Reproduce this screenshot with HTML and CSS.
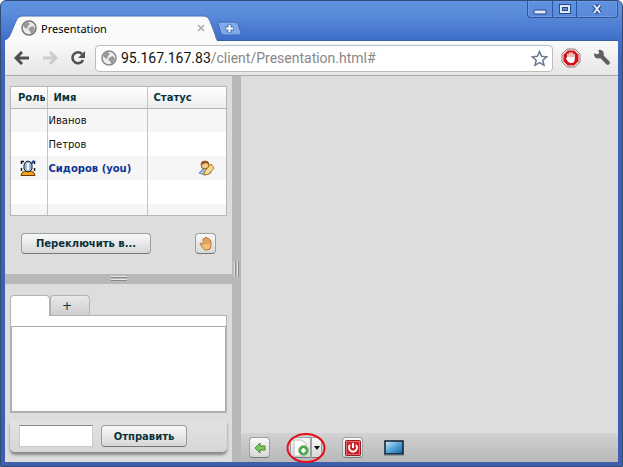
FILE: index.html
```html
<!DOCTYPE html>
<html lang="ru">
<head>
<meta charset="utf-8">
<title>Presentation</title>
<link rel="stylesheet" href="styles.css">
</head>
<body>
<div class="window">
  <header class="titlebar">
    <div class="tab">
      <svg class="tab-shape" viewBox="0 0 212 26" preserveAspectRatio="none" aria-hidden="true"><path d="M0 26V25Q4 24 6 18L11 6Q13 1 18 1H198Q203 1 205 6L210 19Q212 24 212 26Z" fill="#fafafa"/><path d="M0 25Q4 24 6 18L11 6Q13 1 18 1H198Q203 1 205 6L210 19Q211 24 212 25" fill="none" stroke="#4a6eb2" stroke-width="1"/></svg>
      <svg class="globe" viewBox="0 0 16 16" aria-hidden="true"><circle cx="8" cy="8" r="7" fill="#eee" stroke="#777" stroke-width="1.5"/><path d="M3 3L7 2 9 4 7 6 6 9 4 8 2 6ZM9 7L12 6 14 9 12 13 10 14 9 11 7 10Z" fill="#999"/></svg>
      <span class="tab-title">Presentation</span>
      <button class="plain tab-close" aria-label="Закрыть вкладку"><svg width="8" height="8" viewBox="0 0 8 8"><path d="M1 1L7 7M7 1L1 7" stroke="#aaa" stroke-width="1.5"/></svg></button>
    </div>
    <button class="plain new-tab" aria-label="Новая вкладка"><svg width="25" height="15" viewBox="0 0 25 15"><path d="M3 1H18Q20 1 21 3L24 12Q24 14 22 14H7Q5 14 4 12L1 3Q1 1 3 1Z" fill="#80a9e9" stroke="#4169b8"/><path d="M12.500 3.500V11.500M8.500 7.500H16.500" stroke="#476cae" stroke-width="4"/><path d="M12.500 4V11M9 7.500H16" stroke="#fff" stroke-width="2"/></svg></button>
    <div class="window-buttons">
      <button class="plain" aria-label="Свернуть"><svg width="14" height="12" viewBox="0 0 14 12"><path d="M1 7H13V11H1Z" fill="#dce8fb" stroke="#294987"/></svg></button>
      <button class="plain" aria-label="Развернуть"><svg width="14" height="12" viewBox="0 0 14 12"><path d="M3 3H11V9H3Z" fill="none" stroke="#294987" stroke-width="4"/><path d="M3 3H11V9H3Z" fill="none" stroke="#dce8fb" stroke-width="2"/></svg></button>
      <button class="plain wide" aria-label="Закрыть"><svg width="12" height="12" viewBox="0 0 12 12"><path d="M3 2L9 10M9 2L3 10" stroke="#294987" stroke-width="4"/><path d="M3 2L9 10M9 2L3 10" stroke="#e3edff" stroke-width="2"/></svg></button>
    </div>
  </header>
  <nav class="toolbar">
    <button class="plain nav" aria-label="Назад"><svg width="16" height="14" viewBox="0 0 16 14"><path d="M8 1L2 7 8 13M2 7H15" fill="none" stroke="#505050" stroke-width="3"/></svg></button>
    <button class="plain nav" aria-label="Вперёд"><svg width="16" height="14" viewBox="0 0 16 14"><path d="M8 1L14 7 8 13M14 7H1" fill="none" stroke="#ccc" stroke-width="3"/></svg></button>
    <button class="plain nav" aria-label="Обновить"><svg width="16" height="16" viewBox="0 0 16 16"><path d="M12 4A5.500 5.500 0 1 0 13 10" fill="none" stroke="#505050" stroke-width="2.600"/><path d="M15 1V8H8Z" fill="#505050"/></svg></button>
    <div class="address">
      <svg class="globe" viewBox="0 0 16 16" aria-hidden="true"><circle cx="8" cy="8" r="7" fill="#eee" stroke="#888" stroke-width="1.500"/><path d="M3 3L7 2 9 4 7 6 6 9 4 8 2 6ZM9 7L12 6 14 9 12 13 10 14 9 11 7 10Z" fill="#999"/></svg>
      <span class="url"><b>95.167.167.83</b>/client/Presentation.html#</span>
      <button class="plain" aria-label="В закладки"><svg width="17" height="17" viewBox="0 0 17 17"><path d="M8.500 1.500L10.600 6.300 15.700 6.800 11.800 10.200 13 15.300 8.500 12.600 4 15.300 5.200 10.200 1.300 6.800 6.400 6.300Z" fill="#fff" stroke="#69798e" stroke-width="1.500"/></svg></button>
    </div>
    <button class="plain blocker" aria-label="Блокировщик"><svg width="20" height="20" viewBox="0 0 20 20"><path d="M6 1H14L19 6V14L14 19H6L1 14V6Z" fill="#eee" stroke="#977"/><path d="M6.700 2.500H13.300L17.500 6.700V13.300L13.300 17.500H6.700L2.500 13.300V6.700Z" fill="#d2141d"/><path d="M7 9.500V6M9 9V5M11 9V5M13 10V6.500" stroke="#fff" stroke-width="1.400" stroke-linecap="round"/><path d="M6.300 9H13.700V12Q13 15 10.500 15H9.500Q7 14.500 5 10.500Z" fill="#fff"/></svg></button>
    <button class="plain" aria-label="Настройки"><svg width="18" height="18" viewBox="0 0 17 17"><path d="M7 6L14 13" stroke="#606060" stroke-width="4" stroke-linecap="round"/><path d="M1 4L4 5 6 4 5 1Q8 0 10 3 11 6 8 8 5 10 2 8 1 7 1 4Z" fill="#606060"/></svg></button>
  </nav>
  <main class="content">
    <section class="side">
      <div class="people">
        <div class="list">
          <table>
            <colgroup><col class="c-role"><col class="c-name"><col></colgroup>
            <thead><tr><th><span>Роль</span></th><th>Имя</th><th>Статус</th></tr></thead>
            <tbody>
              <tr><td></td><td>Иванов</td><td></td></tr>
              <tr><td></td><td>Петров</td><td></td></tr>
              <tr class="me"><td class="role"><svg width="16" height="16" viewBox="0 0 16 16"><path d="M1.500 4V1.500H4M12 1.500H14.500V4M1.500 8V11M14.500 8V11" fill="none" stroke="#111" stroke-width="1.500"/><path d="M1 15.500Q1 12 5 11H11Q15 12 15 15.500Z" fill="#f7a61c" stroke="#6b3600"/><path d="M4 5Q5 1 8 1T12 5V9Q10 12 8 12T4 9Z" fill="#9fb9d2" stroke="#18202f"/><path d="M7 3H9V10H7Z" fill="#eef5fa"/><path d="M11 4L14 1" stroke="#2952bb" stroke-width="2"/></svg></td><td>Сидоров (you)</td><td class="status"><svg width="17" height="16" viewBox="0 0 17 16"><path d="M1 13L5 9 11 8 13 13 7 15Z" fill="#9cbfe5" stroke="#6688b5"/><circle cx="7" cy="5" r="4" fill="#f5c98d" stroke="#955d22"/><path d="M3 5Q2 1 7 1T11 5L8 3Z" fill="#985b20"/><path d="M7 11L13 4 16 8 11 14 6 15Z" fill="#f8d88e" stroke="#b47823"/></svg></td></tr>
              <tr><td></td><td></td><td></td></tr>
              <tr class="rest"><td></td><td></td><td></td></tr>
            </tbody>
          </table>
        </div>
        <div class="actions">
          <button class="btn switch">Переключить в...</button>
          <button class="btn square hand" aria-label="Поднять руку"><svg width="14" height="15" viewBox="0 0 14 15"><path d="M4 9V3Q5 1.500 6 3V2Q7 0 8 2V2.500Q9 1 10 3V4Q11.500 3 12 5V10Q12 14 8 14H6Q4 13 1 8 1 6 3 8Z" fill="#f3bd78" stroke="#b77a34"/><path d="M6 3V8M8 3V8M10 4V8" stroke="#c98a42"/></svg></button>
        </div>
      </div>
      <div class="split-h"><i></i></div>
      <div class="chat">
        <div class="chat-tabs"><button class="chat-tab on" aria-label="Чат"></button><button class="chat-tab">+</button></div>
        <div class="chat-box"><textarea aria-label="Сообщения" readonly></textarea></div>
        <form class="send"><input type="text" aria-label="Сообщение"><button type="button" class="btn submit">Отправить</button></form>
      </div>
    </section>
    <div class="split-v"><i></i></div>
    <section class="stage">
      <div class="controls">
        <button class="btn square" aria-label="Назад"><svg width="12" height="12" viewBox="0 0 12 12"><path d="M1 6L6 1V4H11V8H6V11Z" fill="#82c45c" stroke="#4a8538"/></svg></button>
        <div class="add">
          <button class="btn file" aria-label="Добавить"><svg width="18" height="18" viewBox="0 0 18 18"><path d="M2 1H10L14 5V17H2Z" fill="#fff" stroke="#bbb"/><circle cx="11.500" cy="11.500" r="5" fill="#4ca44b" stroke="#95c38d"/><path d="M11.500 9V14M9 11.500H14" stroke="#fff" stroke-width="2"/></svg></button><button class="btn arrow" aria-label="Меню"><svg width="6" height="4" viewBox="0 0 6 4"><path d="M0 0H6L3 4Z" fill="#111"/></svg></button>
          <svg class="ring" viewBox="0 0 40 30" aria-hidden="true"><ellipse cx="20" cy="15" rx="18.500" ry="14" fill="none" stroke="#e5101c" stroke-width="2"/></svg>
        </div>
        <button class="btn square" aria-label="Выключить"><svg width="16" height="16" viewBox="0 0 16 16"><rect x=".5" y=".5" width="15" height="15" rx="1" fill="#cf2028" stroke="#941b20"/><rect x="1.500" y="1.500" width="13" height="13" fill="none" stroke="#e36a68"/><path d="M5 5A4 4 0 1 0 11 5M8 3V8" fill="none" stroke="#fff" stroke-width="2"/></svg></button>
        <button class="btn square quiet" aria-label="Экран"><svg class="screen" width="20" height="16" viewBox="0 0 20 16"><defs><linearGradient id="scr" x1="0" y1="0" x2="1" y2="1"><stop offset="0" stop-color="#d3f0ff"/><stop offset=".5" stop-color="#55a5da"/><stop offset="1" stop-color="#12639f"/></linearGradient></defs><rect x="1" y="1" width="18" height="13" fill="url(#scr)" stroke="#101c2c" stroke-width="1.500"/><path d="M0 15H20" stroke="#68727c"/></svg></button>
      </div>
    </section>
  </main>
</div>
</body>
</html>
```
FILE: styles.css
```css
* { box-sizing: border-box; }

body {
  margin: 0;
  font-family: "DejaVu Sans", Verdana, sans-serif;
  font-size: 10px;
  color: #0b333c;
  background: #fff;
}

svg { display: block; flex: none; }
button, input, textarea { font: inherit; color: inherit; }

.plain { display: flex; align-items: center; justify-content: center; padding: 0; border: 0; background: none; }

.window {
  display: flex;
  flex-direction: column;
  height: 100vh;
  padding: 0 4px 4px;
  border: 1px solid #344b7a;
  border-radius: 6px 6px 0 0;
  background: linear-gradient(#5b92df 0, #5c8cda 12px, #3e6dca 40px, #3e63b3 60px, #3e5eae);
}

.titlebar { display: flex; align-items: flex-end; height: 40px; flex: none; border-bottom: 1px solid #385fac; }

.tab { position: relative; display: flex; align-items: center; gap: 4px; width: 212px; height: 26px; margin-bottom: -1px; padding: 0 12px 0 16px; }
.tab > * { position: relative; }
.tab .tab-shape { position: absolute; inset: 0; width: 100%; height: 100%; }
.globe { width: 16px; height: 16px; }
.tab-title { flex: 1; font-family: "Noto Sans", sans-serif; font-size: 11px; color: #000; }
.new-tab { margin-bottom: 4px; }

.window-buttons { display: flex; align-self: flex-start; margin-left: auto; height: 17px; border: 1px solid #2f559e; border-top: 0; border-radius: 0 0 4px 4px; box-shadow: inset 0 0 0 1px #6d9be4; }
.window-buttons button { width: 24px; }
.window-buttons button + button { border-left: 1px solid #2f559e; }
.window-buttons .wide { width: 41px; }

.toolbar { display: flex; align-items: center; gap: 12px; height: 35px; flex: none; padding: 0 7px 0 9px; background: linear-gradient(#fafafa, #e6e6e6); border-bottom: 1px solid #aaa; }
.address { display: flex; align-items: center; flex: 1; gap: 4px; height: 27px; margin: 0 -4px 0 -3px; padding: 0 4px 0 5px; border: 1px solid #bdbdbd; border-radius: 4px; background: #fff; }
.url { flex: 1; font-family: Roboto, sans-serif; font-size: 14px; white-space: nowrap; color: #888; }
.url b { font-weight: normal; color: #111; }

.content { display: grid; grid-template-columns: 227px 9px 1fr; flex: 1; min-height: 0; background: #ddd; }
.side { display: flex; flex-direction: column; min-height: 0; }

.people { padding: 10px 5px 20px 5px; }
.list { border: 1px solid #b4b7b9; background: #fff; }
table { width: 100%; border-collapse: collapse; table-layout: fixed; font-size: 10px; }
.c-role { width: 36px; }
.c-name { width: 100px; }
th, td { padding: 0 1px; text-align: left; white-space: nowrap; overflow: hidden; }
th + th, td + td { border-left: 1px solid #c0c4c6; }
th { height: 21px; padding: 0 6px; background: linear-gradient(#fff, #ececec); border-bottom: 1px solid #b4b7b9; }
th:first-child { padding: 0 2px 0 7px; }
th span { display: block; overflow: hidden; }
td { height: 24px; color: #111; }
tbody tr:nth-child(odd) { background: #f6f6f6; }
.me { font-weight: bold; color: #0b3596; }
.me td { color: inherit; }
.role { padding-left: 9px; }
.status svg { margin-left: auto; margin-right: 10px; }
.rest td { height: 11px; }

.btn {
  display: flex; align-items: center; justify-content: center;
  height: 21px; padding: 0;
  border: 1px solid #999fa2; border-bottom-color: #777; border-radius: 4px;
  background: linear-gradient(#f9f9f9, #d7d7d7);
  font-weight: bold;
}
.actions { display: flex; justify-content: space-between; padding: 17px 11px 0; }
.switch { width: 130px; }
.square { width: 21px; }
.quiet { border-color: transparent; background: none; }

.split-h { display: flex; align-items: center; justify-content: center; height: 10px; flex: none; background: #b8b8b8; }
.split-h i { width: 16px; height: 6px; background: repeating-linear-gradient(#e4e4e4 0 1px, #888 1px 2px, #b8b8b8 2px 3px); }
.split-v { display: flex; align-items: center; justify-content: center; background: #b8b8b8; }
.split-v i { width: 6px; height: 16px; background: repeating-linear-gradient(90deg, #e4e4e4 0 1px, #888 1px 2px, #b8b8b8 2px 3px); }

.chat { display: flex; flex-direction: column; flex: 1; min-height: 0; padding: 11px 5px 10px; }
.chat-tabs { display: flex; }
.chat-tab { width: 40px; height: 20px; padding: 0 6px 0 0; border: 1px solid #b0b3b5; border-bottom: 0; border-radius: 4px 4px 0 0; background: linear-gradient(#e9e9e9, #cecece); font-size: 12px; line-height: 18px; }
.chat-tab.on { height: 21px; margin-bottom: -1px; background: #fff; z-index: 1; }
.chat-box { display: flex; flex: 1; min-height: 0; padding-top: 10px; border: 1px solid #b0b3b5; background: #fff; }
textarea { flex: 1; width: 100%; padding: 2px; border: 1px solid #aaacad; background: #fff; resize: none; outline: 0; }
.send { display: flex; gap: 8px; margin-top: 8px; padding: 4px 9px 5px; border-radius: 0 0 5px 5px; background: linear-gradient(#e2e2e2, #d6d6d6); box-shadow: 0 3px 3px #888; }
.send input { width: 74px; height: 22px; border: 1px solid #ccc; border-top-color: #888; background: #fff; }
.submit { width: 86px; height: 22px; }

.stage { display: flex; flex-direction: column; justify-content: flex-end; min-width: 0; }
.controls { display: flex; align-items: center; height: 29px; gap: 20px; padding: 0 8px; background: linear-gradient(#d2d2d2, #b8b8b8); border-radius: 4px 0 0 0; }
.add { position: relative; display: flex; }
.file { width: 21px; border-radius: 4px 0 0 4px; }
.arrow { width: 11px; border-radius: 0 4px 4px 0; }
.ring { position: absolute; left: -4px; top: -4px; width: 40px; height: 30px; }
```
